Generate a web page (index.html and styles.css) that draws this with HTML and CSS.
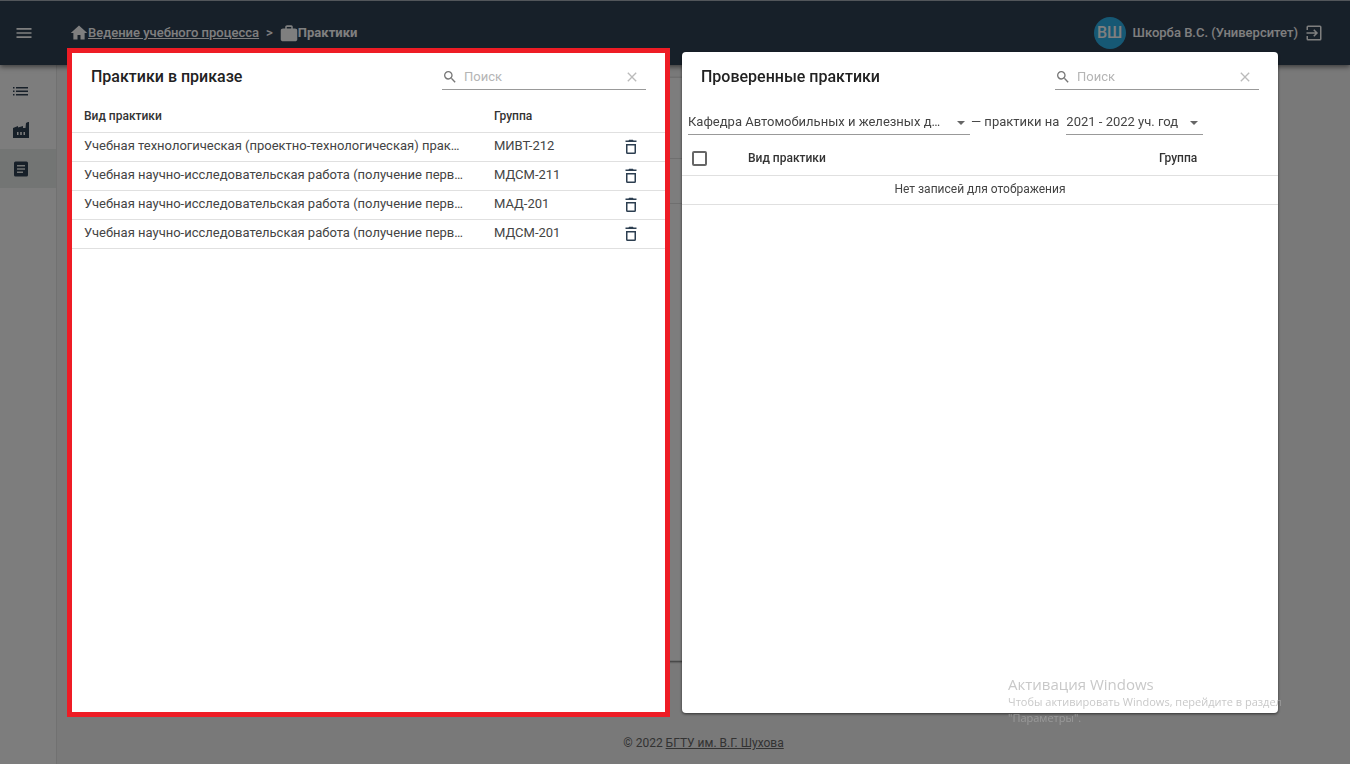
FILE: index.html
```html
<!DOCTYPE html>
<html lang="ru">
<head>
<meta charset="utf-8">
<title>Практики</title>
<link rel="stylesheet" href="styles.css">
</head>
<body>
<svg class="defs" aria-hidden="true">
  <symbol id="trash" viewBox="0 0 16 16"><path d="M3 5h10v8.500a1.500 1.500 0 0 1-1.500 1.500h-7A1.500 1.500 0 0 1 3 13.500zM4.500 6.500v7h7v-7zM5.500 1.500l.6-.7h3.800l.6.7H13.500V3h-11V1.500z" fill="currentColor" fill-rule="evenodd"/></symbol>
  <symbol id="search" viewBox="0 0 24 24"><path d="M15.500 14h-.79l-.28-.27A6.470 6.470 0 0 0 16 9.500 6.500 6.500 0 1 0 9.500 16c1.610 0 3.090-.59 4.230-1.570l.27.28v.79l5 4.990L20.490 19l-4.990-5zm-6 0C7.010 14 5 11.990 5 9.500S7.010 5 9.500 5 14 7.010 14 9.500 11.990 14 9.500 14z" fill="currentColor"/></symbol>
  <symbol id="clear" viewBox="0 0 24 24"><path d="M19 6.410 17.590 5 12 10.590 6.410 5 5 6.410 10.590 12 5 17.590 6.410 19 12 13.410 17.590 19 19 17.590 13.410 12z" fill="currentColor"/></symbol>
  <symbol id="arrow" viewBox="0 0 10 5"><path d="M0 0h10L5 5z" fill="currentColor"/></symbol>
</svg>
<div class="app">
  <header class="topbar">
    <button class="icon-btn menu-btn" aria-label="Меню"><svg class="ic20" viewBox="0 0 24 24"><path d="M3 18h18v-2H3v2zm0-5h18v-2H3v2zm0-7v2h18V6H3z" fill="currentColor"/></svg></button>
    <nav class="crumbs">
      <svg class="ic18" viewBox="0 0 24 24"><path d="M10 20.500v-6h4v6h5.500V12H23L12 2 1 12h3.500v8.500z" fill="currentColor"/></svg>
      <a href="#">Ведение учебного процесса</a>
      <span class="sep">&gt;</span>
      <svg class="ic18" viewBox="0 0 24 24"><path d="M20 6h-3V4c0-1.500-.7-2.500-2-2.500H9.500C8 1.500 7 2.500 7 4v2H4C2.500 6 1 7 1 8.500v12C1 22 2.500 23 4 23h16c1.700 0 3-1 3-2.500v-12C23 7 21.700 6 20 6zM15 6H9V4h6v2z" fill="currentColor"/></svg>
      <strong>Практики</strong>
    </nav>
    <div class="user">
      <span class="avatar">ВШ</span>
      <span class="user-name">Шкорба В.С. (Университет)</span>
      <button class="icon-btn" aria-label="Выход"><svg class="ic18" viewBox="0 0 24 24"><path d="M11 15.600 12.400 17l5-5-5-5L11 8.400l2.600 2.600H2v2h11.600L11 15.600zM20 2H4a2 2 0 0 0-2 2v4h2V4h16v16H4v-4H2v4a2 2 0 0 0 2 2h16a2 2 0 0 0 2-2V4a2 2 0 0 0-2-2z" fill="currentColor"/></svg></button>
    </div>
  </header>
  <div class="body">
    <nav class="side">
      <a href="#" aria-label="Список"><svg class="ic16" viewBox="0 0 16 16"><path d="M0 4h1.500v1.500H0zM0 7.500h1.500V9H0zM0 11h1.500v1.500H0zM3 4h12v1.500H3zM3 7.500h12V9H3zM3 11h12v1.500H3z" fill="currentColor"/></svg></a>
      <a href="#" aria-label="Предприятия"><svg class="ic16" viewBox="0 0 16 16"><path d="M0 16V6l5-2v1.500L10 4v2h2.500L13 1l2-1h1v16zM4 10v3h1.500v-3zm3.200 0v3h1.600v-3zm3.300 0v3H12v-3z" fill="currentColor" fill-rule="evenodd"/></svg></a>
      <a href="#" class="active" aria-label="Практики"><svg class="ic16" viewBox="0 0 16 16"><path d="M2.500.5h11A1.500 1.500 0 0 1 15 2v12a1.500 1.500 0 0 1-1.500 1.500h-11A1.500 1.500 0 0 1 1 14V2A1.500 1.500 0 0 1 2.500.5zM4 4v1.500h8V4zm0 3.200v1.600h8V7.200zm0 3.300V12h6v-1.500z" fill="currentColor" fill-rule="evenodd"/></svg></a>
    </nav>
    <main class="content">
      <div class="card"><div class="card-head"></div><div class="card-row"></div></div>
      <footer>© 2022 <a href="#">БГТУ им. В.Г. Шухова</a></footer>
    </main>
  </div>
</div>
<div class="overlay">
  <section class="panel marked">
    <div class="panel-head">
      <h2>Практики в приказе</h2>
      <div class="search">
        <svg class="ic16"><use href="#search"/></svg>
        <input type="text" placeholder="Поиск" aria-label="Поиск в приказе">
        <button class="icon-btn" aria-label="Очистить"><svg class="ic16"><use href="#clear"/></svg></button>
      </div>
    </div>
    <table class="orders">
      <colgroup><col><col class="c-group"><col class="c-act"></colgroup>
      <thead><tr><th>Вид практики</th><th>Группа</th><th></th></tr></thead>
      <tbody>
        <tr><td>Учебная технологическая (проектно-технологическая) прак…</td><td>МИВТ-212</td><td><button class="icon-btn" aria-label="Удалить"><svg class="ic16"><use href="#trash"/></svg></button></td></tr>
        <tr><td>Учебная научно-исследовательская работа (получение перв…</td><td>МДСМ-211</td><td><button class="icon-btn" aria-label="Удалить"><svg class="ic16"><use href="#trash"/></svg></button></td></tr>
        <tr><td>Учебная научно-исследовательская работа (получение перв…</td><td>МАД-201</td><td><button class="icon-btn" aria-label="Удалить"><svg class="ic16"><use href="#trash"/></svg></button></td></tr>
        <tr><td>Учебная научно-исследовательская работа (получение перв…</td><td>МДСМ-201</td><td><button class="icon-btn" aria-label="Удалить"><svg class="ic16"><use href="#trash"/></svg></button></td></tr>
      </tbody>
    </table>
  </section>
  <section class="panel checked">
    <div class="panel-head">
      <h2>Проверенные практики</h2>
      <div class="search">
        <svg class="ic16"><use href="#search"/></svg>
        <input type="text" placeholder="Поиск" aria-label="Поиск в проверенных">
        <button class="icon-btn" aria-label="Очистить"><svg class="ic16"><use href="#clear"/></svg></button>
      </div>
    </div>
    <div class="filters">
      <span class="pick pick-dept"><select aria-label="Кафедра"><option>Кафедра Автомобильных и железных д…</option></select><svg><use href="#arrow"/></svg></span>
      <span>— практики на</span>
      <span class="pick pick-year"><select aria-label="Учебный год"><option>2021 - 2022 уч. год</option></select><svg><use href="#arrow"/></svg></span>
    </div>
    <table class="empty">
      <colgroup><col class="c-check"><col><col class="c-last"></colgroup>
      <thead><tr><th><input type="checkbox" aria-label="Выбрать все"></th><th>Вид практики</th><th>Группа</th></tr></thead>
      <tbody><tr><td colspan="3">Нет записей для отображения</td></tr></tbody>
    </table>
  </section>
</div>
<aside class="watermark"><p class="wm-title">Активация Windows</p><p>Чтобы активировать Windows, перейдите в раздел<br>"Параметры".</p></aside>
</body>
</html>
```
FILE: styles.css
```css
* { box-sizing: border-box; }
body { margin: 0; font: 13px/20px Roboto, "Open Sans", sans-serif; color: #444; }
h2, p { margin: 0; }
a { color: inherit; }
.defs { display: none; }
svg { display: block; flex: none; }
.ic16 { width: 16px; height: 16px; }
.ic18 { width: 18px; height: 18px; }
.ic20 { width: 20px; height: 20px; }
.icon-btn { display: flex; padding: 0; border: 0; background: none; color: inherit; }

.app { display: flex; flex-direction: column; min-height: 100vh; background: #f3f3f3; }
.topbar { display: flex; align-items: center; height: 65px; padding: 0 27px 0 14px; border-top: 1px solid #a4acb4; background: #2f4053; color: #fff; font-weight: 500; box-shadow: 0 2px 5px rgba(0,0,0,.5); z-index: 1; }
.crumbs { display: flex; align-items: center; margin-left: 36px; }
.sep { margin: 0 7px; }
.crumbs strong { font-weight: 700; }
.user { display: flex; align-items: center; margin-left: auto; gap: 7px; }
.avatar { width: 32px; height: 32px; border-radius: 50%; background: #2cb0e8; font-size: 16px; line-height: 32px; text-align: center; }
.body { display: flex; flex: 1; }
.side { width: 57px; padding-top: 6px; border-right: 1px solid #e2e2e2; background: #fafafa; color: #2f4053; }
.side a { display: flex; align-items: center; height: 39px; padding-left: 13px; }
.side .active { background: #e6eae9; }
.content { display: flex; flex: 1; flex-direction: column; padding: 12px 15px 0; }
.card { flex: 1; margin-right: 80px; background: #fafafa; border: 1px solid #dedede; box-shadow: 0 1px 2px #666; }
.card-head { height: 81px; border-bottom: 1px solid #dedede; }
.card-row { height: 45px; border-bottom: 1px solid #dedede; }
footer { padding: 72px 0 11px; font-size: 12px; text-align: center; color: #666; }

.overlay { position: fixed; inset: 0; display: grid; grid-template-columns: 603fr 596fr; gap: 12px; padding: 48px 72px 47px 67px; background: rgba(0,0,0,.5); z-index: 2; }
.panel { min-width: 0; background: #fff; }
.marked { border: 5px solid #ee1c25; }
.checked { margin: 4px 0; border-radius: 4px; box-shadow: 0 1px 3px rgba(0,0,0,.6); }
.panel-head { display: flex; align-items: center; justify-content: space-between; height: 48px; padding: 0 19px; }
.checked .panel-head { height: 50px; }
h2 { font-size: 16px; font-weight: 500; color: #222; }
.search { display: flex; align-items: center; width: 204px; height: 26px; border-bottom: 1px solid #999; color: #777; }
.search input { flex: 1; min-width: 0; margin-left: 6px; padding: 0; border: 0; outline: 0; background: none; font: inherit; }
.search input::placeholder { color: #b5b5b5; }
.search .icon-btn { margin-right: 6px; color: #bbb; }
table { width: 100%; border-collapse: collapse; table-layout: fixed; }
th, td { height: 29px; padding: 0 0 2px 12px; border-bottom: 1px solid #e0e0e0; text-align: left; white-space: nowrap; overflow: hidden; }
th { height: 31px; padding-bottom: 0; font-size: 12px; font-weight: 500; color: #333; }
.orders td:last-child { padding: 0; color: #2c3e50; }
.c-group { width: 141px; }
.c-act { width: 42px; }
.filters { display: flex; align-items: center; height: 40px; padding-left: 6px; }
.pick { position: relative; height: 26px; border-bottom: 1px solid #999; }
.pick svg { position: absolute; right: 5px; top: 12px; width: 8px; height: 4px; color: #666; pointer-events: none; }
.pick select { appearance: none; width: 100%; height: 25px; padding: 0; border: 0; background: none; font: inherit; color: inherit; }
.pick-dept { width: 282px; margin-right: 1px; }
.pick-year { width: 137px; margin-left: 7px; }
.c-check { width: 54px; }
.c-last { width: 131px; }
.empty th { height: 33px; }
.empty th:first-child { padding-left: 10px; }
.empty input { display: block; appearance: none; width: 15px; height: 15px; margin: 0; border: 2px solid #666; border-radius: 2px; }
.empty td { padding-left: 0; font-size: 12px; text-align: center; }
.watermark { position: fixed; right: 42px; bottom: 38px; width: 300px; font: 11px/16px "Open Sans", sans-serif; color: rgba(170,170,170,.65); z-index: 3; }
.wm-title { font-size: 15px; line-height: 20px; }
```
